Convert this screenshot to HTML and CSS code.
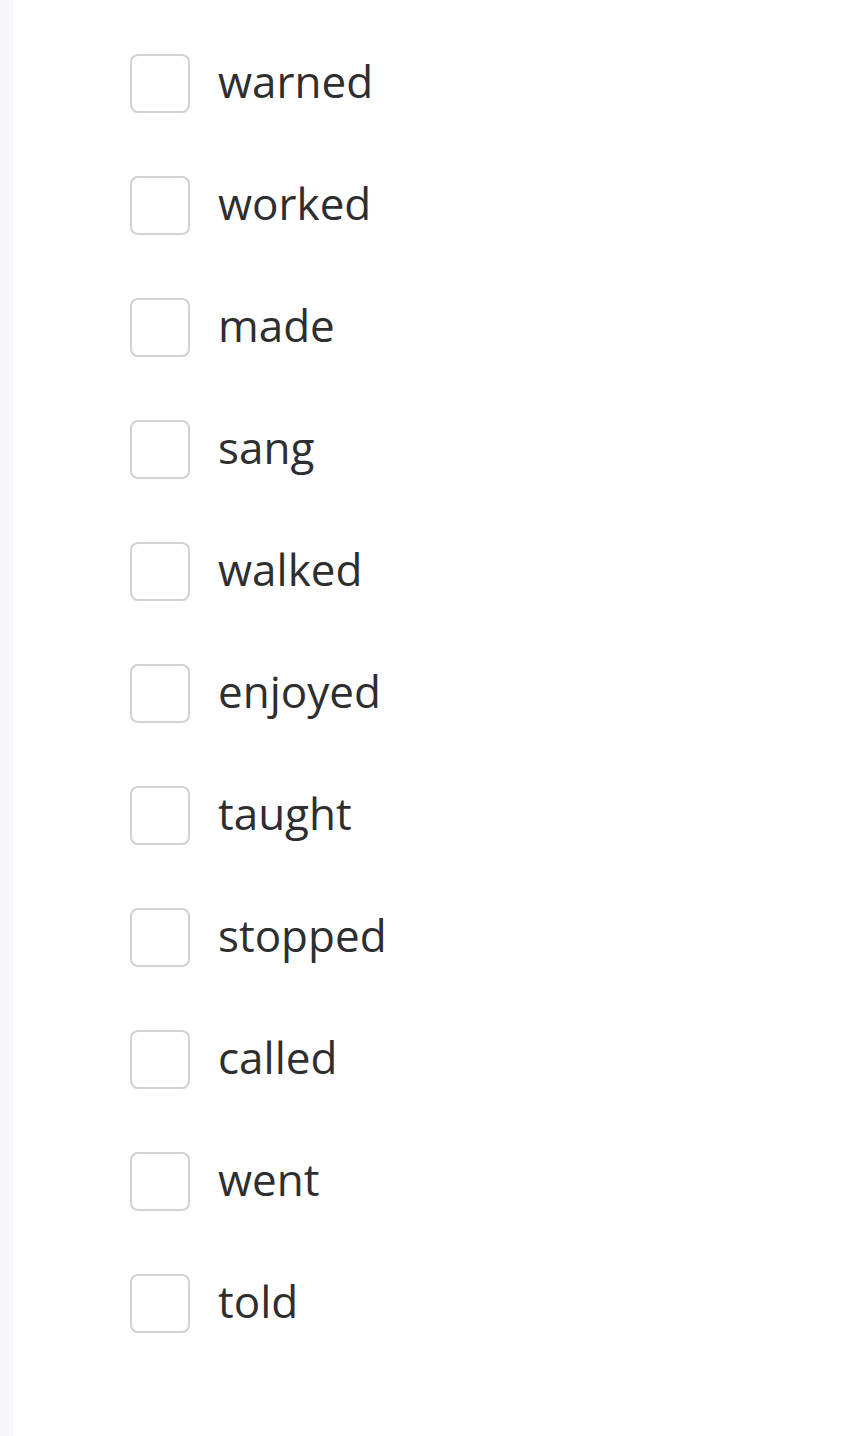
FILE: index.html
```html
<!DOCTYPE html>
<html lang="en">
<head>
    <meta charset="UTF-8">
    <meta name="viewport" content="width=device-width, initial-scale=1.0">
    <title>Choose the words</title>
    <link rel="stylesheet" href="styles.css">
</head>
<body>
    <div class="page">
        <div class="sidebar"></div>
        <div class="content">
            <ul class="options">
                <li><label class="option"><input type="checkbox"><span class="box"></span><span class="word">warned</span></label></li>
                <li><label class="option"><input type="checkbox"><span class="box"></span><span class="word">worked</span></label></li>
                <li><label class="option"><input type="checkbox"><span class="box"></span><span class="word">made</span></label></li>
                <li><label class="option"><input type="checkbox"><span class="box"></span><span class="word">sang</span></label></li>
                <li><label class="option"><input type="checkbox"><span class="box"></span><span class="word">walked</span></label></li>
                <li><label class="option"><input type="checkbox"><span class="box"></span><span class="word">enjoyed</span></label></li>
                <li><label class="option"><input type="checkbox"><span class="box"></span><span class="word">taught</span></label></li>
                <li><label class="option"><input type="checkbox"><span class="box"></span><span class="word">stopped</span></label></li>
                <li><label class="option"><input type="checkbox"><span class="box"></span><span class="word">called</span></label></li>
                <li><label class="option"><input type="checkbox"><span class="box"></span><span class="word">went</span></label></li>
                <li><label class="option"><input type="checkbox"><span class="box"></span><span class="word">told</span></label></li>
            </ul>
        </div>
    </div>
</body>
</html>
```

FILE: styles.css
```css
html, body {
    margin: 0;
    padding: 0;
    background: #ffffff;
}
body {
    font-family: "Open Sans", "Noto Sans", sans-serif;
    color: #2e2e30;
}
.page {
    display: flex;
    min-height: 1436px;
}
.sidebar {
    width: 13px;
    flex-shrink: 0;
    background: #f5f7fa;
    box-shadow: 1px 0 2px rgba(0, 0, 0, 0.04);
}
.content {
    flex: 1;
    background: #ffffff;
}
.options {
    list-style: none;
    margin: 0;
    padding: 53px 0 0 117px;
    display: flex;
    flex-direction: column;
    gap: 62px;
}
.option {
    display: flex;
    align-items: center;
    height: 60px;
    cursor: pointer;
}
.option input {
    display: none;
}
.box {
    box-sizing: border-box;
    width: 60px;
    height: 59px;
    border: 2px solid #d2d2d2;
    border-radius: 8px;
    background: #fff;
    flex-shrink: 0;
}
.word {
    margin-left: 28px;
    font-size: 44px;
    line-height: 60px;
    margin-top: -5px;
}
```
